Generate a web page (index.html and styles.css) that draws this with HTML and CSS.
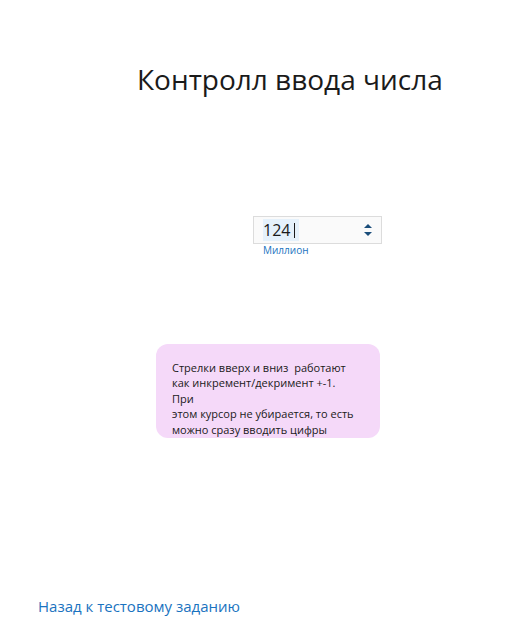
FILE: index.html
```html
<!DOCTYPE html>
<html lang="ru">
<head>
<meta charset="utf-8">
<link rel="stylesheet" href="styles.css">
</head>
<body>
<div class="page">
  <h1 class="title">Контролл ввода числа</h1>
  <div class="field-wrap">
    <div class="field">
      <div class="field-box">
        <span class="value"><span class="sel">124<span class="caret"></span></span></span>
        <span class="spin">
          <svg width="8" height="16" viewBox="0 0 8 16"><path d="M4 2 L8 6 L0 6 Z" fill="#1a4d7a"/><path d="M0 10 L8 10 L4 14 Z" fill="#1a4d7a"/></svg>
        </span>
      </div>
      <div class="field-label">Миллион</div>
    </div>
  </div>
  <div class="note-wrap">
    <div class="note">Стрелки вверх и вниз&nbsp; работают<br>как инкремент/декримент +-1.<br>При<br>этом курсор не убирается, то есть<br>можно сразу вводить цифры</div>
  </div>
  <a class="back" href="#">Назад к тестовому заданию</a>
</div>
</body>
</html>
```

FILE: styles.css
```css
html, body {
  margin: 0;
  padding: 0;
  background: #fff;
}
body {
  font-family: "Open Sans", "Noto Sans", sans-serif;
  color: #1a1a1a;
}
.page {
  width: 530px;
  height: 632px;
  display: flex;
  flex-direction: column;
}
.title {
  margin: 60px 0 0 137px;
  font-size: 28px;
  font-weight: 400;
  line-height: 38px;
  color: #1a1a1a;
}
.field-wrap {
  margin: 118px 0 0 253px;
}
.field-box {
  width: 127px;
  height: 26px;
  border: 1px solid #dcdcdc;
  background: #fafafa;
  display: flex;
  align-items: center;
  justify-content: space-between;
  box-sizing: content-box;
}
.value {
  display: flex;
  align-items: center;
  margin-left: 9px;
  font-size: 16px;
  color: #1a1a1a;
}
.sel {
  display: flex;
  align-items: center;
  background: #e5f1fb;
  height: 22px;
  padding: 0 4px 0 0;
}
.caret {
  display: inline-block;
  width: 1px;
  height: 15px;
  background: #1a1a1a;
  margin-left: 4px;
}
.spin {
  display: flex;
  margin-right: 9px;
}
.field-label {
  margin: 0 0 0 10px;
  font-size: 10px;
  line-height: 12px;
  color: #1a73c0;
}
.note-wrap {
  margin: 88px 0 0 156px;
}
.note {
  width: 224px;
  box-sizing: border-box;
  height: 94px;
  background: #f5d9f9;
  border-radius: 12px;
  padding: 16px 16px 0 16px;
  font-size: 11px;
  line-height: 15.4px;
  color: #1a1a1a;
}
.back {
  margin: 158px 0 0 38px;
  font-size: 15px;
  line-height: 20px;
  color: #1a73c0;
  text-decoration: none;
  align-self: flex-start;
}
```
